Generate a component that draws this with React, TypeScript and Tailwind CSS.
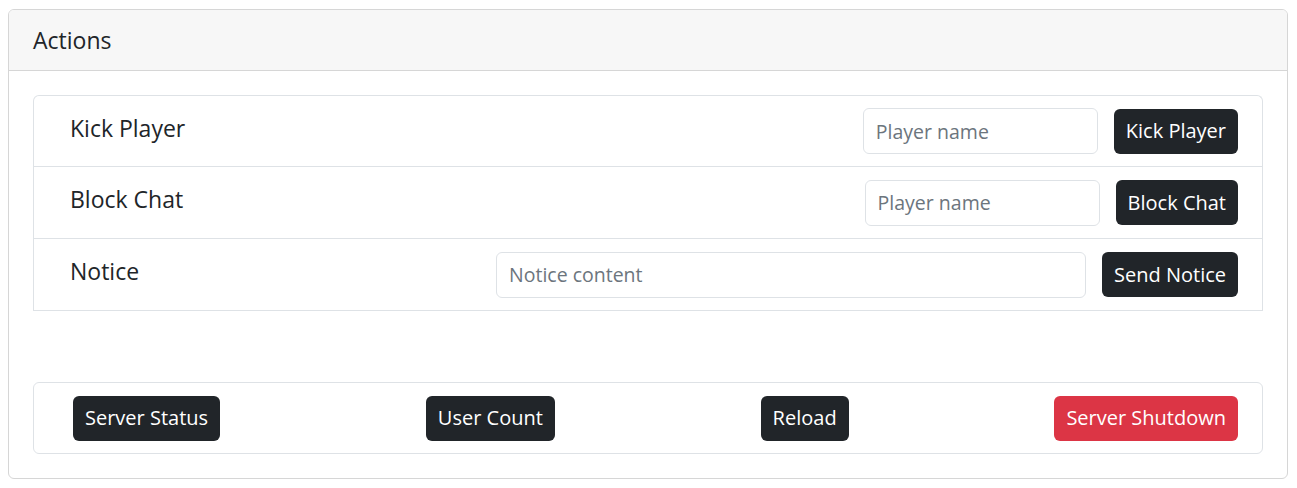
import React from 'react'

const font = { fontFamily: '"Open Sans", "Noto Sans", sans-serif' }

function ActionRow({ label, placeholder, button, inputWidth, height }: { label: string; placeholder: string; button: string; inputWidth: string; height: string }) {
  return (
    <div className={`${height} flex items-center border-b border-[#dee2e6] pl-9 pr-6`}>
      <div className="flex-1 pb-[6px] text-[23px] text-[#212529]">{label}</div>
      <input
        className={`${inputWidth} h-[46px] rounded-md border border-[#dee2e6] px-3 text-[19.5px] text-[#212529] placeholder:text-[#6c757d] outline-none`}
        placeholder={placeholder}
      />
      <button className="ml-4 h-[45px] rounded-md bg-[#212529] px-3 text-[20px] text-white">{button}</button>
    </div>
  )
}

export default function App() {
  return (
    <div className="bg-white min-h-screen pt-[9px] pl-2" style={font}>
      <div className="w-[1280px] rounded-md border border-[#d6d6d6] overflow-hidden">
        {/* Header */}
        <div className="h-[61px] bg-[#f7f7f7] border-b border-[#d6d6d6] px-6 flex items-center">
          <h5 className="text-[23px] text-[#212529]">Actions</h5>
        </div>

        <div className="px-6 pt-6 pb-6">
          {/* Action list */}
          <div className="rounded-t-md border-x border-t border-[#dee2e6]">
            <ActionRow label="Kick Player" placeholder="Player name" button="Kick Player" inputWidth="w-[235px]" height="h-[71px]" />
            <ActionRow label="Block Chat" placeholder="Player name" button="Block Chat" inputWidth="w-[235px]" height="h-[72px]" />
            <ActionRow label="Notice" placeholder="Notice content" button="Send Notice" inputWidth="w-[590px]" height="h-[72px]" />
          </div>

          <div className="h-[71px]" />

          {/* Server controls */}
          <div className="h-[72px] rounded-md border border-[#dee2e6] flex items-center justify-between pl-[39px] pr-6">
            <button className="h-[45px] rounded-md bg-[#212529] px-3 text-[20px] text-white">Server Status</button>
            <button className="h-[45px] rounded-md bg-[#212529] px-3 text-[20px] text-white">User Count</button>
            <button className="h-[45px] rounded-md bg-[#212529] px-3 text-[20px] text-white">Reload</button>
            <button className="h-[45px] rounded-md bg-[#dc3545] px-3 text-[20px] text-white">Server Shutdown</button>
          </div>
        </div>
      </div>
    </div>
  )
}
